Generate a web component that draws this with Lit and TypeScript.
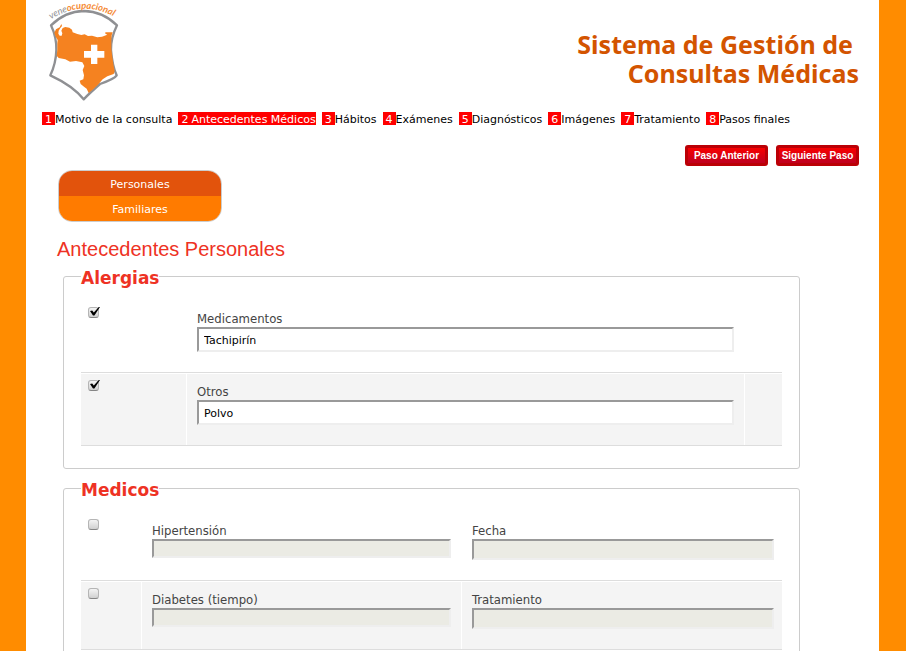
import { LitElement, html, css, svg } from "lit";
import { customElement, property } from "lit/decorators.js";

interface Field {
  id: string;
  label: string;
  value?: string;
  disabled?: boolean;
  size?: "tall" | "short";
}

interface Row {
  id: string;
  checked: boolean;
  fields: Field[];
}

const STEPS = [
  "Motivo de la consulta",
  "Antecedentes Médicos",
  "Hábitos",
  "Exámenes",
  "Diagnósticos",
  "Imágenes",
  "Tratamiento",
  "Pasos finales",
];

const ALERGIAS: Row[] = [
  { id: "a1", checked: true, fields: [{ id: "medicamentos", label: "Medicamentos", value: "Tachipirín", size: "tall" }] },
  { id: "a2", checked: true, fields: [{ id: "otros", label: "Otros", value: "Polvo", size: "tall" }] },
];

const MEDICOS: Row[] = [
  {
    id: "m1",
    checked: false,
    fields: [
      { id: "hipertension", label: "Hipertensión", disabled: true, size: "short" },
      { id: "fecha", label: "Fecha", disabled: true },
    ],
  },
  {
    id: "m2",
    checked: false,
    fields: [
      { id: "diabetes", label: "Diabetes (tiempo)", disabled: true, size: "short" },
      { id: "tratamiento", label: "Tratamiento", disabled: true },
    ],
  },
];

const MAP = svg`<path fill="#f58220" d="M124 72 L126 78 L121 84 L116 92 L115 101 L119 107 L125 107
  L127 100 L124 92 L128 84 L136 81 L148 83 L156 89 L158 97 L172 102 L184 105 L194 103 L204 108
  L216 107 L232 112 L246 110 L262 104 L256 101 L256 97 L278 97 L275 106 L274 122 L274 146
  L277 172 L281 198 L284 214 L281 222 L262 229 L248 238 L234 254 L218 269 L206 279 L200 266
  L192 260 L182 252 L179 242 L190 238 L192 226 L188 210 L193 198 L187 187 L168 183 L150 185
  L136 178 L116 174 L110 167 L112 150 L112 130 L113 120 L107 110 L103 98 L108 88 L119 82 Z"/>`;

@customElement("brand-logo")
class BrandLogo extends LitElement {
  static styles = css`
    :host {
      display: block;
    }
    .logo {
      display: block;
      width: 77px;
      height: 104px;
    }
    .name {
      font: italic 700 28px Lato, sans-serif;
    }
  `;

  render() {
    return html`<svg class="logo" viewBox="78 0 231 312" role="img" aria-label="veneocupacional">
      <path
        d="M93 76 Q136 34 191 33 Q248 34 291 76 Q272 115 273 150 Q277 198 290 226 Q284 236 240 252 Q210 278 191 298 Q160 258 91 226 Q108 190 109 150 Q110 112 93 76 Z"
        fill="#fff"
        stroke="#8f9093"
        stroke-width="7"
        stroke-linejoin="round"
      />
      ${MAP}
      <path d="M213 134h19v19h21v20h-21v19h-19v-19h-21v-20h21z" fill="#fff" />
      <path id="arc" d="M93 58 Q196 -8 304 62" fill="none" />
      <text class="name"><textPath href="#arc"><tspan fill="#8f9093" font-weight="400">vene</tspan><tspan fill="#f58a35">ocupacional</tspan></textPath></text>
    </svg>`;
  }
}

@customElement("field-group")
class FieldGroup extends LitElement {
  @property() heading = "";
  @property() layout = "single";
  @property({ attribute: false }) rows: Row[] = [];

  static styles = css`
    :host {
      display: block;
      font-family: "DejaVu Sans", sans-serif;
    }
    .group {
      margin: 0;
      min-width: 0;
      border: 1px solid #ccc;
      border-radius: 3px;
      padding: 13px 17px 22px;
    }
    .legend {
      padding: 4px 0 0;
      font-size: 17px;
      line-height: 17px;
      font-weight: 700;
      color: #ee3224;
    }
    .row {
      display: grid;
      border-bottom: 1px solid #ddd;
      background: #fff;
    }
    .row:nth-of-type(even) .cell {
      background: #f4f4f4;
    }
    .single {
      grid-template-columns: 106px 1fr 37px;
    }
    .double {
      grid-template-columns: 61px 1fr 1fr;
    }
    .cell {
      min-width: 0;
      border: 0 solid #fff;
      border-top-width: 1px;
      border-right-width: 1px;
      padding: 10px 10px 20px;
    }
    .cell:last-child {
      border-right-width: 0;
      padding-right: 8px;
    }
    .tick {
      padding: 6px 7px;
    }
    .label {
      display: block;
      font: 13px/16px "DejaVu Sans Condensed", "DejaVu Sans", sans-serif;
      color: #444;
    }
    .input {
      display: block;
      box-sizing: border-box;
      width: 100%;
      height: 21px;
      margin: 0;
      padding: 2px 5px 0;
      border: 2px solid;
      border-color: #999 #eee #eee #999;
      background: #fff;
      font: 11px "DejaVu Sans", sans-serif;
      color: #000;
    }
    .tall {
      height: 25px;
    }
    .short {
      height: 19px;
    }
    .input:disabled {
      background: #ebebe4;
    }
    .check {
      appearance: none;
      position: relative;
      display: block;
      box-sizing: border-box;
      width: 11px;
      height: 11px;
      margin: 0;
      border: 1px solid #b5b5b5;
      border-bottom-color: #858585;
      border-radius: 3px;
      background: linear-gradient(#f4f4f4, #d0d0d0);
    }
    .check:checked::after {
      content: "";
      position: absolute;
      left: 1px;
      top: -1px;
      width: 10px;
      height: 9px;
      background: #000;
      clip-path: polygon(0 45%, 22% 40%, 38% 62%, 88% 0, 100% 0, 44% 95%, 30% 95%);
    }
  `;

  private field(f: Field) {
    return html`<div class="cell">
      <label class="label" for=${f.id}>${f.label}</label>
      <input class="input ${f.size ?? ""}" id=${f.id} type="text" .value=${f.value ?? ""} ?disabled=${f.disabled} />
    </div>`;
  }

  render() {
    return html`<fieldset class="group">
      <legend class="legend">${this.heading}</legend>
      ${this.rows.map(
        (r) => html`<div class="row ${this.layout}">
          <div class="cell tick">
            <input class="check" type="checkbox" id=${r.id} aria-label=${r.fields[0].label} .checked=${r.checked} />
          </div>
          ${r.fields.map((f) => this.field(f))}
          ${this.layout === "single" ? html`<div class="cell"></div>` : null}
        </div>`
      )}
    </fieldset>`;
  }
}

@customElement("app-root")
class AppRoot extends LitElement {
  static styles = css`
    :host {
      display: block;
      height: 100vh;
      overflow-y: auto;
      scrollbar-width: none;
      background: #ff8c00;
      font: 11px/13px "DejaVu Sans", sans-serif;
      color: #000;
    }
    .page {
      min-height: 100%;
      margin: 0 27px 0 26px;
      background: #fff;
    }
    .header {
      display: flex;
      justify-content: space-between;
      padding: 0 20px;
    }
    .title {
      margin: 30px 0 0;
      font: 700 25px/29px "Noto Sans", sans-serif;
      color: #d35400;
      text-align: right;
    }
    .line {
      display: block;
    }
    .first {
      padding-right: 6px;
    }
    .steps {
      display: flex;
      flex-wrap: wrap;
      gap: 6px;
      padding: 8px 16px 0;
    }
    .step {
      color: #000;
      line-height: 11px;
      text-decoration: none;
      white-space: nowrap;
    }
    .number {
      display: inline-block;
      padding: 2px 3px 0;
      background: #f00;
      color: #fff;
    }
    .current {
      background: #f00;
      color: #fff;
    }
    .actions {
      display: flex;
      justify-content: flex-end;
      gap: 8px;
      padding: 20px 20px 0;
    }
    .action {
      box-sizing: border-box;
      width: 83px;
      height: 21px;
      padding: 0;
      border: 3px solid #bb0006;
      border-radius: 3px;
      background: linear-gradient(#f80000, #be0020);
      font: 700 10px "Liberation Sans", sans-serif;
      color: #fff;
      white-space: nowrap;
    }
    .menu {
      box-sizing: border-box;
      width: 164px;
      margin: 4px 0 0 32px;
      border: 1px solid #ccc;
      border-radius: 14px;
      overflow: hidden;
    }
    .entry {
      display: block;
      padding-top: 2px;
      background: #ff7b00;
      color: #fff;
      line-height: 23px;
      text-align: center;
      text-decoration: none;
    }
    .selected {
      background: #e2530c;
    }
    .heading {
      margin: 15px 31px 5px;
      font: 400 20px/24px "Liberation Sans", sans-serif;
      color: #ee3224;
    }
    .groups {
      display: grid;
      gap: 9px;
      padding: 0 79px 20px 37px;
    }
  `;

  render() {
    return html`<div class="page">
      <header class="header">
        <brand-logo></brand-logo>
        <h1 class="title">
          <span class="line first">Sistema de Gestión de</span>
          <span class="line">Consultas Médicas</span>
        </h1>
      </header>
      <nav class="steps">
        ${STEPS.map(
          (s, i) => html`<a class="step ${i === 1 ? "current" : ""}" href="#paso${i + 1}"><span class="number">${i + 1}</span>${s}</a>`
        )}
      </nav>
      <div class="actions">
        <button class="action" type="button">Paso Anterior</button>
        <button class="action" type="button">Siguiente Paso</button>
      </div>
      <nav class="menu">
        <a class="entry selected" href="#personales">Personales</a>
        <a class="entry" href="#familiares">Familiares</a>
      </nav>
      <h2 class="heading">Antecedentes Personales</h2>
      <form class="groups">
        <field-group heading="Alergias" layout="single" .rows=${ALERGIAS}></field-group>
        <field-group heading="Medicos" layout="double" .rows=${MEDICOS}></field-group>
      </form>
    </div>`;
  }
}
